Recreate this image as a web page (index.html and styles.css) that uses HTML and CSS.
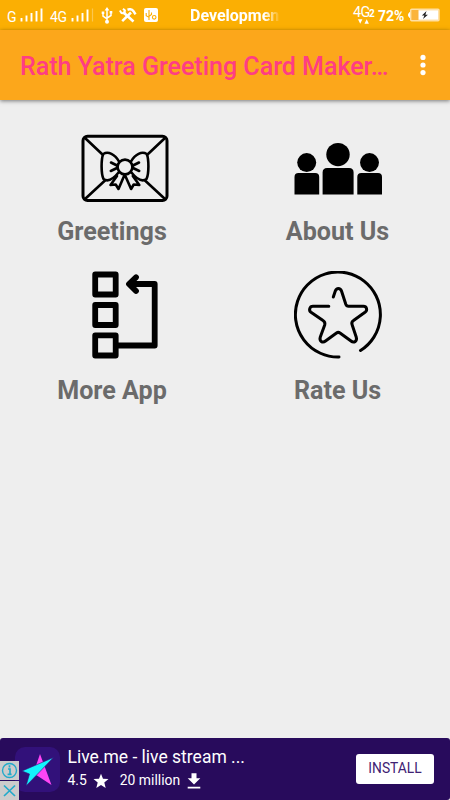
FILE: index.html
```html
<!DOCTYPE html>
<html lang="en">
<head>
<meta charset="utf-8">
<meta name="viewport" content="width=device-width, initial-scale=1">
<title>Rath Yatra Greeting Card Maker</title>
<link rel="stylesheet" href="styles.css">
</head>
<body>
<div class="screen">
  <div class="status">
    <span class="net net-g">G</span>
    <svg class="bars" width="24" height="14" viewBox="0 0 24 14"><path d="M1.500 13.500V10M6.500 13.500V7.500M11.500 13.500V5M16.500 13.500V3M21.500 13.500V.5" stroke="#fff" stroke-width="1.900"/></svg>
    <span class="net net-4g">4G</span>
    <svg class="bars bars-two" width="24" height="14" viewBox="0 0 24 14"><path d="M1.500 13.500V10M6.500 13.500V7.500M11.500 13.500V5M16.500 13.500V1.500" stroke="#fff" stroke-width="1.900"/><path d="M21.500 13.500V.5" stroke="#fff" stroke-width="1.200" opacity=".3"/></svg>
    <svg class="usb" width="12" height="17" viewBox="0 0 12 17" fill="none" stroke="#fff" stroke-width="1.5"><path d="M6 2v12M2 6v3.2l4 2.6M10 5v3.5l-4 2.6"/><path d="M6 0l2.4 3.4H3.6zM.7 4.5h2.6v2.6H.7zM8.7 4h2.6v2.6H8.7z" fill="#fff" stroke="none"/><circle cx="6" cy="14.8" r="2" fill="#fff" stroke="none"/></svg>
    <svg class="tools" width="18" height="15" viewBox="0 0 18 15" fill="none" stroke="#fff"><path d="M3.2 13.2L12 4.5" stroke-width="2.5"/><path d="M4 4l10.5 9.5" stroke-width="2.6"/><path d="M.8 2.5L2.5 5l3 .4.4-3L4 .8" stroke-width="2"/><path d="M8.5 1.7q4-1.4 6 1.5l2 3.2" stroke-width="2.5"/></svg>
    <svg class="debug" width="14" height="14" viewBox="0 0 14 14"><rect width="14" height="14" rx="2" fill="#fff"/><g fill="none" stroke="#fcae05" stroke-width="1.1"><path d="M5 2v10M2.2 5v2.6L5 9.4M7.5 4.5v2L5 8.4"/><circle cx="10.2" cy="9.3" r="1.8"/></g></svg>
    <span class="ticker">Developmen</span>
    <span class="data"><span class="data-net">4G</span><b class="sim">2</b><svg class="arrows" width="12" height="5" viewBox="0 0 12 5"><path d="M0 .3h4.4L2.2 4.7zM6.5 4.7h4.4L8.7.3z" fill="#fff"/></svg></span>
    <span class="percent">72%</span>
    <svg class="battery" width="33" height="14" viewBox="0 0 33 14"><path d="M2.5 4.5Q.3 7 2.5 9.5z" fill="#fff" stroke="#fff"/><rect x="3.7" y="1.2" width="28.3" height="11.6" rx="1" fill="#fbb43a" stroke="#ffe0a4" stroke-width="1.4"/><path d="M11.500 2.200h19.800v9.600H11.500z" fill="#fff"/><path d="M19.500 3l-4.600 4.400h2.500L16 11l4.900-4.300h-2.500z" fill="#222"/></svg>
  </div>
  <header class="appbar">
    <h1>Rath Yatra Greeting Card Maker…</h1>
    <svg class="menu" width="6" height="22" viewBox="0 0 6 22" fill="#fff"><circle cx="3" cy="3.4" r="2.6"/><circle cx="3" cy="11" r="2.6"/><circle cx="3" cy="18.6" r="2.6"/></svg>
  </header>
  <main class="grid">
    <a class="tile tile-left">
      <svg width="88" height="88" viewBox="0 0 88 88" fill="none" stroke="#000" stroke-width="2.600" stroke-linecap="round" stroke-linejoin="round">
        <rect x="2" y="11.300" width="84" height="64.300" rx="4.500" stroke-width="3"/>
        <path d="M4 13l17.500 16.500M84 13L66.500 29.500M4 74l20-18.500M84 74L64 55.500"/>
        <path d="M38 36.500C34 29 27 26 22.300 29C20 34 20 49 22.500 54C27 57.500 32 54.500 38 47M50 36.500C54 29 61 26 65.700 29C68 34 68 49 65.500 54C61 57.500 56 54.500 50 47"/>
        <circle cx="44" cy="42" r="7.400"/>
        <path d="M30 37.500l6 3M29.800 46l6.200-3M58 37.500l-6 3M58.200 46l-6.200-3"/>
        <path d="M36 51l-6.500 9 5.200-.5 2.800 4.500 6.200-14.500 6.400 14.500 2.600-4.500 5.600.5-6.500-9"/>
      </svg>
      <span class="label">Greetings</span>
    </a>
    <a class="tile">
      <svg width="88" height="88" viewBox="0 0 88 88" fill="#000">
        <circle cx="44" cy="29.600" r="11.700"/><circle cx="12.700" cy="37.600" r="9.500"/><circle cx="75.500" cy="37.600" r="9.500"/>
        <path d="M28.600 69.500V47.500q0-4.500 4.500-4.500h22q4.500 0 4.500 4.500v22zM.5 69.500V52q0-4 4-4h16.700q4 0 4 4v17.500zM63.300 69.500V52q0-4 4-4H84q4 0 4 4v17.500z"/>
      </svg>
      <span class="label">About Us</span>
    </a>
    <a class="tile tile-left">
      <svg width="88" height="88" viewBox="0 0 88 88" fill="none" stroke="#000" stroke-width="5.800" stroke-linecap="round" stroke-linejoin="round">
        <path d="M14.200 3.500h20.500v20H14.200zM14.200 34h20.500v20H14.200zM14.200 64.300h20.500v20.200H14.200z"/>
        <path d="M35 74.500h38.700V13H50"/><path d="M55 6.300L48 13l7 7"/>
      </svg>
      <span class="label">More App</span>
    </a>
    <a class="tile">
      <svg width="88" height="88" viewBox="0 0 88 88" fill="none" stroke="#000" stroke-width="3" stroke-linecap="round" stroke-linejoin="round">
        <path d="M45 86A42.500 42.500 0 1 1 66.500 79.500"/>
        <path d="M34.800 35.300H19C15.500 35.300 14.500 39.500 17 41.300L29 49.500Q31.500 51 30.700 54L26.300 66C25 70 28.500 72.500 31.500 70L42.500 62Q44.300 60.700 46 62L57 70C60 72.500 63.500 70 62.200 66L58.200 54Q57 51 59.500 49.500L71 41.300C74 39 72.500 35.300 69.500 35.300H54.500Q52.500 35.300 51.800 33.300L47.500 20C46.300 16.500 42.500 16.500 41.300 20L39.300 26"/>
      </svg>
      <span class="label">Rate Us</span>
    </a>
  </main>
  <footer class="ad">
    <svg class="ad-icon" width="45" height="45" viewBox="0 0 45 45"><rect width="45" height="45" rx="10" fill="#32117a"/><path d="M25 7l11.500 31L22 28.500l-4-1z" fill="#ff45f5"/><path d="M38.500 10.500L7 24l7.500 3-3.500 12z" fill="#13f4fc" stroke="#32117a" stroke-width=".6"/></svg>
    <div class="ad-copy">
      <div class="ad-title">Live.me - live stream ...</div>
      <div class="ad-meta">
        <span>4.5</span>
        <svg class="star" width="16" height="16" viewBox="0 0 16 16"><path d="M8 .7l2 5 5.500.4-4.200 3.500 1.400 5.400L8 12.100 3.300 15l1.400-5.400L.5 6.100 6 5.700z" fill="#fff"/></svg>
        <span>20 million</span>
        <svg class="download" width="14" height="16" viewBox="0 0 14 16"><path d="M4.500.3h5v5h3.800L7 11.500.700 5.300h3.800zM.700 13.700h12.600v1.700H.700z" fill="#fff"/></svg>
      </div>
    </div>
    <button class="install">INSTALL</button>
    <div class="ad-badges">
      <svg width="19" height="19" viewBox="0 0 19 19"><circle cx="9.500" cy="9.500" r="7" fill="none" stroke="#22aacb" stroke-width="1.400"/><path d="M8 8h2v5M7.600 13.300h4M9.500 4.300v2.200" fill="none" stroke="#22aacb" stroke-width="1.700"/></svg>
      <svg width="19" height="19" viewBox="0 0 19 19"><path d="M4 4.500l11 10.500M15 4.500L4 15" fill="none" stroke="#22aacb" stroke-width="1.700"/></svg>
    </div>
  </footer>
</div>
</body>
</html>
```
FILE: styles.css
```css
* { box-sizing: border-box; }
body { margin: 0; font-family: Roboto, sans-serif; background: #eee; }
.screen { width: 450px; height: 800px; display: flex; flex-direction: column; overflow: hidden; }
svg { display: block; flex: none; }

.status { height: 30px; flex: none; display: flex; align-items: center; background: #fbaf03; color: #fff; white-space: nowrap; padding: 0 10px 0 7px; }
.net { font-size: 14px; line-height: 16px; padding-top: 3px; }
.net-g { width: 13px; }
.bars { margin-bottom: 1px; }
.net-4g { width: 20px; margin-left: 6px; letter-spacing: -.3px; }
.bars-two { margin-left: 1px; }
.usb { margin-left: 6px; }
.tools { margin-left: 6px; }
.debug { margin-left: 7px; }
.ticker { margin-left: 32px; width: 92px; overflow: hidden; font-size: 16px; font-weight: 700; line-height: 20px; padding-top: 2px; -webkit-mask-image: linear-gradient(90deg, #000 74px, transparent 91px); mask-image: linear-gradient(90deg, #000 74px, transparent 91px); }
.data { margin-left: auto; width: 25px; height: 18px; display: flex; flex-wrap: wrap; align-content: flex-start; align-items: flex-end; }
.data-net { font-size: 14.5px; line-height: 14px; letter-spacing: -.7px; width: 16px; }
.sim { font-size: 10px; line-height: 12px; }
.arrows { margin: -1px 0 0 5px; }
.percent { font-size: 14px; font-weight: 700; line-height: 18px; padding-top: 2px; width: 26px; }
.battery { margin-left: 3px; }

.appbar { position: relative; height: 70px; flex: none; display: flex; align-items: center; justify-content: space-between; padding: 4px 24.5px 0 20px; background: #fca71b; box-shadow: 0 1px 4px rgba(0, 0, 0, .5); }
h1 { margin: 0; font-size: 25px; line-height: 32px; font-weight: 500; color: #ff3d84; white-space: nowrap; }
.menu { margin-bottom: 4px; }

.grid { flex: 1; display: grid; grid-template-columns: 224px 227px; grid-template-rows: 146px 146px; padding-top: 25px; }
.tile { display: flex; flex-direction: column; align-items: center; }
.tile-left svg { margin-left: 26px; }
.label { margin-top: 3.500px; font-size: 25.1px; line-height: 30px; font-weight: 700; color: #6b6b6b; }
.tile:nth-child(n + 3) .label { margin-top: 16.500px; }

.ad { position: relative; height: 62px; flex: none; display: flex; align-items: center; padding: 0 16px 0 15px; background: #280b5c; border-radius: 3px; color: #fff; }
.ad-copy { margin-left: 7.5px; padding-bottom: 2px; white-space: nowrap; }
.ad-title { font-size: 17.5px; line-height: 22px; }
.ad-meta { display: flex; align-items: center; margin-top: 1px; font-size: 13.9px; line-height: 22px; }
.star { margin: 2px 10.500px 0 6.500px; }
.download { margin: 2px 0 0 7px; }
.install { margin-left: auto; width: 78px; height: 30px; padding: 0 0 2px; border: 0; border-radius: 3px; background: #fff; color: #402273; font: 400 13.8px/28px Roboto, sans-serif; }
.ad-badges { position: absolute; left: 0; bottom: 0; display: grid; gap: 1px; }
.ad-badges svg { background: #ccc; }
```
